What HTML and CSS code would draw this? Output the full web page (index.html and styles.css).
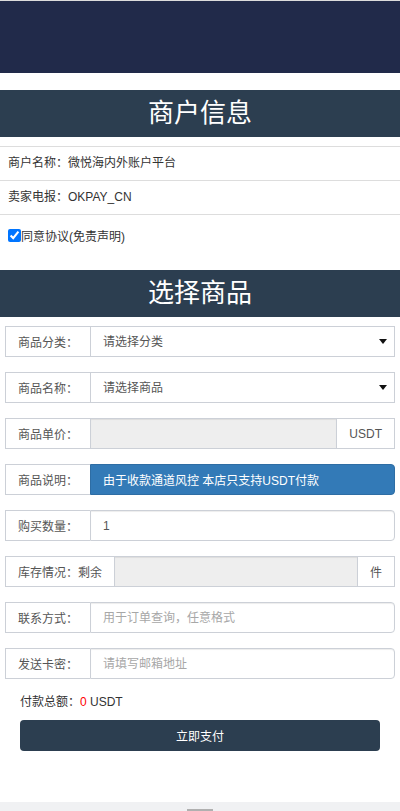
FILE: index.html
```html
<!DOCTYPE html>
<html lang="zh-CN">
<head>
<meta charset="utf-8">
<meta name="viewport" content="width=device-width, initial-scale=1">
<title>商户信息</title>
<link rel="stylesheet" href="styles.css">
</head>
<body>
<div class="topbar"></div>

<h2 class="sec-title first">商户信息</h2>
<div class="info">
  <div class="info-row">商户名称：微悦海内外账户平台</div>
  <div class="info-row">卖家电报：OKPAY_CN</div>
  <div class="info-check">
    <label class="agree"><input type="checkbox" checked><span>同意协议(免责声明)</span></label>
  </div>
</div>

<h2 class="sec-title">选择商品</h2>
<form class="order" onsubmit="return false">
  <div class="group">
    <span class="addon">商品分类：</span>
    <div class="select-wrap">
      <select class="field"><option>请选择分类</option></select>
    </div>
  </div>
  <div class="group">
    <span class="addon">商品名称：</span>
    <div class="select-wrap">
      <select class="field"><option>请选择商品</option></select>
    </div>
  </div>
  <div class="group">
    <span class="addon">商品单价：</span>
    <input class="field readonly mid" type="text" readonly>
    <span class="addon tail">USDT</span>
  </div>
  <div class="group">
    <span class="addon">商品说明：</span>
    <div class="field notice">由于收款通道风控 本店只支持USDT付款</div>
  </div>
  <div class="group">
    <span class="addon">购买数量：</span>
    <input class="field" type="text" value="1">
  </div>
  <div class="group">
    <span class="addon">库存情况：剩余</span>
    <input class="field readonly mid" type="text" readonly>
    <span class="addon tail">件</span>
  </div>
  <div class="group">
    <span class="addon">联系方式：</span>
    <input class="field" type="text" placeholder="用于订单查询，任意格式">
  </div>
  <div class="group">
    <span class="addon">发送卡密：</span>
    <input class="field" type="text" placeholder="请填写邮箱地址">
  </div>

  <div class="total">付款总额：<span class="amount">0</span> USDT</div>
  <button class="pay" type="submit">立即支付</button>
</form>

<div class="footer"><span class="handle"></span></div>
</body>
</html>
```

FILE: styles.css
```css
* { box-sizing: border-box; }

html, body {
  margin: 0;
  padding: 0;
  background: #fff;
}

body {
  font-family: "Liberation Sans", "Noto Sans CJK SC", sans-serif;
  font-size: 12px;
  color: #333;
}

.topbar {
  height: 73px;
  border-top: 1px solid #dcdcdc;
  background: #212a4a;
}

.sec-title {
  margin: 0;
  height: 47px;
  line-height: 47px;
  background: #2c3e50;
  color: #fff;
  text-align: center;
  font-size: 26px;
  font-weight: normal;
}

.sec-title.first {
  margin-top: 17px;
}

.info {
  padding-top: 9px;
}

.info-row {
  height: 34px;
  line-height: 33px;
  border-top: 1px solid #dddddd;
  padding-left: 8px;
  font-size: 12px;
  color: #333;
}

.info-check {
  height: 56px;
  border-top: 1px solid #dddddd;
  padding: 12px 0 0 8px;
}

.agree {
  display: inline-flex;
  align-items: center;
  font-size: 12px;
  color: #333;
}

.agree input {
  margin: 0;
  width: 13px;
  height: 13px;
}

.order {
  padding: 9px 5px 0;
}

.group {
  display: flex;
  height: 31px;
  margin-bottom: 15px;
}

.addon {
  display: flex;
  align-items: center;
  flex: none;
  padding: 0 12px;
  border: 1px solid #ccd0d7;
  border-right: 0;
  background: #fff;
  color: #555;
  font-size: 12px;
  white-space: nowrap;
}

.addon.tail {
  border-right: 1px solid #ccd0d7;
  border-left: 0;
}

.field {
  flex: 1;
  min-width: 0;
  height: 31px;
  margin: 0;
  padding: 0 12px;
  border: 1px solid #ccd0d7;
  border-radius: 0 4px 4px 0;
  background: #fff;
  color: #555;
  font-family: inherit;
  font-size: 12px;
  outline: none;
  box-shadow: inset 0 1px 1px rgba(0, 0, 0, 0.075);
}

.field::placeholder {
  color: #a7a7a7;
}

.field.mid {
  border-radius: 0;
}

.field.readonly {
  background: #eeeeee;
}

.select-wrap {
  position: relative;
  flex: 1;
  display: flex;
}

.select-wrap .field {
  -webkit-appearance: none;
  appearance: none;
  border-radius: 0;
  box-shadow: none;
  color: #555;
}

.select-wrap::after {
  content: "";
  position: absolute;
  right: 8px;
  top: 13px;
  width: 0;
  height: 0;
  border-left: 4px solid transparent;
  border-right: 4px solid transparent;
  border-top: 5px solid #111;
  pointer-events: none;
}

.notice {
  display: flex;
  align-items: center;
  background: #337ab7;
  border-color: #2e6da4;
  color: #fff;
  box-shadow: none;
}

.total {
  margin: 0 15px;
  height: 16px;
  line-height: 16px;
  color: #333;
  font-size: 12px;
}

.amount {
  color: #ff0000;
}

.pay {
  display: block;
  width: calc(100% - 30px);
  height: 31px;
  margin: 10px 15px 0;
  border: 0;
  border-radius: 4px;
  background: #2c3e50;
  color: #fff;
  font-family: inherit;
  font-size: 12px;
}

.footer {
  margin-top: 51px;
  height: 9px;
  background: #f0f1f3;
  display: flex;
  justify-content: center;
  align-items: flex-end;
}

.handle {
  width: 26px;
  height: 2px;
  background: #b0b0b0;
}
```
